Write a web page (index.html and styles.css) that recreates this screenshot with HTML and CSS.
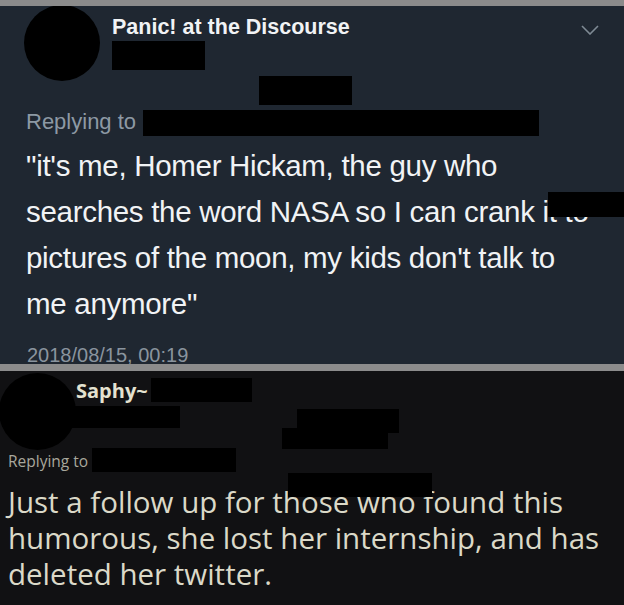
FILE: index.html
```html
<html>
<head>
    <meta charset="utf-8">
    <title>Tweets</title>
    <link rel="stylesheet" href="styles.css">
</head>
<body>
    <div class="tweet tweet-dim">
        <div class="tweet-head">
            <div class="avatar"></div>
            <div class="name">Panic! at the Discourse</div>
            <svg class="chevron" width="18" height="10" viewBox="0 0 18 10">
                <polyline points="1,1 9,9 17,1" fill="none" stroke="#7f8a94" stroke-width="1.6"/>
            </svg>
        </div>
        <div class="replying">Replying to</div>
        <div class="body">"it's me, Homer Hickam, the guy who<br>searches the word NASA so I can crank it to<br>pictures of the moon, my kids don't talk to<br>me anymore"</div>
        <div class="stamp">2018/08/15, 00:19</div>

        <span class="redact r1"></span>
        <span class="redact r2"></span>
        <span class="redact r3"></span>
        <span class="redact r4"></span>
    </div>

    <div class="tweet tweet-dark">
        <div class="tweet-head">
            <div class="avatar"></div>
            <div class="name">Saphy~</div>
        </div>
        <div class="replying">Replying to</div>
        <div class="body">Just a follow up for those who found this<br>humorous, she lost her internship, and has<br>deleted her twitter.</div>

        <span class="redact b1"></span>
        <span class="redact b2"></span>
        <span class="redact b3"></span>
        <span class="redact b4"></span>
        <span class="redact b5"></span>
        <span class="redact b6"></span>
    </div>
</body>
</html>
```

FILE: styles.css
```css
body{
    margin: 0;
    width: 624px;
    height: 605px;
    overflow: hidden;
    background: #111113;
}

.tweet{
    position: relative;
    overflow: hidden;
}

.redact{
    position: absolute;
    background: #000;
}

.avatar{
    flex: none;
    width: 76px;
    height: 76px;
    border-radius: 50%;
    background: #000;
}

.tweet-head{
    display: flex;
}

.body{
    white-space: nowrap;
}

/* top tweet, twitter dim theme */
.tweet-dim{
    height: 358px;
    background: #1f2731;
    border-top: 6px solid #8b8b8b;
    border-bottom: 7px solid #8c8c8c;
    font-family: "Liberation Sans", Arial, sans-serif;
    color: #f1f3f5;
}

.tweet-dim .avatar{
    margin: -1px 0 0 24px;
}

.tweet-dim .name{
    margin: 8px 0 0 12px;
    font-size: 21.5px;
    line-height: 26px;
    font-weight: bold;
}

.tweet-dim .chevron{
    margin: 19px 25px 0 auto;
}

.tweet-dim .replying{
    margin: 28px 0 0 26px;
    font-size: 22px;
    line-height: 26px;
    color: #8d99a4;
}

.tweet-dim .body{
    margin: 8px 0 0 26px;
    font-size: 29.5px;
    line-height: 46px;
    letter-spacing: -0.3px;
}

.tweet-dim .stamp{
    margin: 16px 0 0 27px;
    font-size: 20px;
    line-height: 24px;
    color: #8a949e;
}

.r1{ left: 112px; top: 35px; width: 93px; height: 29px; }
.r2{ left: 259px; top: 70px; width: 93px; height: 29px; }
.r3{ left: 143px; top: 104px; width: 396px; height: 26px; }
.r4{ left: 548px; top: 186px; width: 76px; height: 25px; }

/* bottom tweet, windows black theme */
.tweet-dark{
    height: 234px;
    background: #111113;
    font-family: "Open Sans", "Noto Sans", sans-serif;
    color: #dbd9c8;
}

.tweet-dark .avatar{
    margin: 2px 0 0 -1px;
    height: 77px;
    width: 77px;
}

.tweet-dark .name{
    margin: 6px 0 0 0;
    font-size: 20px;
    line-height: 27px;
    font-weight: bold;
    color: #e4e2d0;
}

.tweet-dark .replying{
    margin: 1px 0 0 8px;
    font-size: 15.5px;
    line-height: 20px;
    color: #a9a89d;
}

.tweet-dark .body{
    margin: 13px 0 0 8px;
    font-size: 29.5px;
    line-height: 36px;
}

.b1{ left: 151px; top: 7px; width: 101px; height: 24px; }
.b2{ left: 70px; top: 35px; width: 110px; height: 22px; }
.b3{ left: 297px; top: 38px; width: 102px; height: 24px; }
.b4{ left: 282px; top: 57px; width: 106px; height: 21px; }
.b5{ left: 92px; top: 77px; width: 144px; height: 24px; }
.b6{ left: 288px; top: 102px; width: 144px; height: 24px; }
```
